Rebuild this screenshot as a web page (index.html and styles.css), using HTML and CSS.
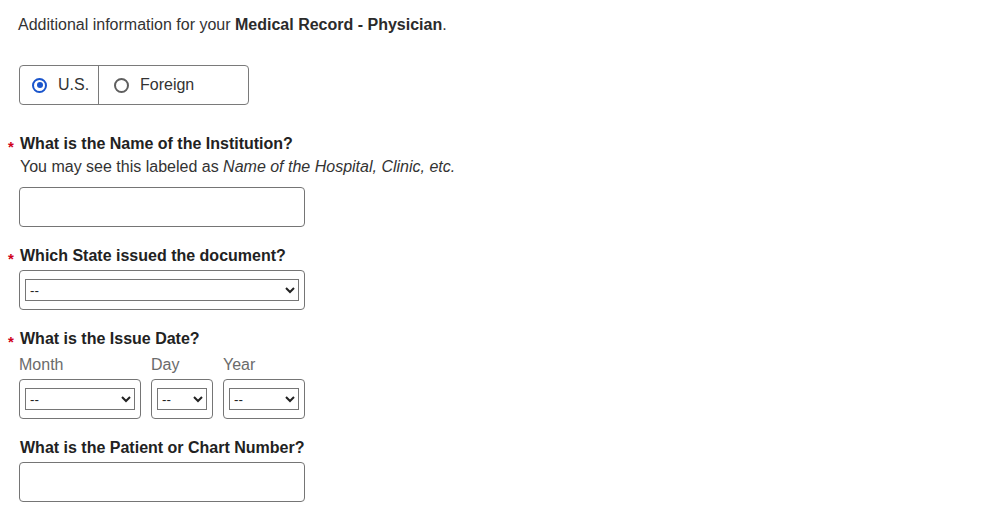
FILE: index.html
```html
<!DOCTYPE html>
<html lang="en">
<head>
<meta charset="utf-8">
<title>Medical Record - Physician</title>
<link rel="stylesheet" href="styles.css">
</head>
<body>
<div class="page">
  <p class="intro">Additional information for your <strong>Medical Record - Physician</strong>.</p>

  <div class="toggle">
    <label class="toggle-opt toggle-us"><span class="radio radio-on"></span><span>U.S.</span></label>
    <label class="toggle-opt toggle-foreign"><span class="radio"></span><span>Foreign</span></label>
  </div>

  <div class="field field-first">
    <div class="label req">What is the Name of the Institution?</div>
    <div class="help">You may see this labeled as <em>Name of the Hospital, Clinic, etc.</em></div>
    <input class="textbox textbox-help" type="text">
  </div>

  <div class="field">
    <div class="label req">Which State issued the document?</div>
    <div class="selwrap sel-full"><select class="sel"><option>--</option></select></div>
  </div>

  <div class="field">
    <div class="label req">What is the Issue Date?</div>
    <div class="date-row">
      <div class="date-col col-month">
        <div class="sublabel">Month</div>
        <div class="selwrap"><select class="sel"><option>--</option></select></div>
      </div>
      <div class="date-col col-day">
        <div class="sublabel">Day</div>
        <div class="selwrap"><select class="sel"><option>--</option></select></div>
      </div>
      <div class="date-col col-year">
        <div class="sublabel">Year</div>
        <div class="selwrap"><select class="sel"><option>--</option></select></div>
      </div>
    </div>
  </div>

  <div class="field">
    <div class="label">What is the Patient or Chart Number?</div>
    <input class="textbox" type="text">
  </div>
</div>
</body>
</html>
```

FILE: styles.css
```css
html, body {
  margin: 0;
  padding: 0;
  background: #ffffff;
}

body {
  font-family: "Liberation Sans", Arial, sans-serif;
  font-size: 16px;
  line-height: 22px;
  color: #333333;
}

.page {
  padding: 14px 0 0 19px;
  width: 600px;
}

.intro {
  margin: 0 0 29px -1px;
}

.intro strong {
  font-weight: bold;
  color: #2b2b2b;
}

.toggle {
  display: flex;
  width: 228px;
  height: 38px;
  border: 1px solid #7a7a7a;
  border-radius: 4px;
}

.toggle-opt {
  display: flex;
  align-items: center;
  gap: 11px;
  color: #333;
}

.toggle-us {
  width: 79px;
  padding-left: 12px;
  box-sizing: border-box;
  border-right: 1px solid #7a7a7a;
}

.toggle-foreign {
  padding-left: 15px;
}

.radio {
  width: 15px;
  height: 15px;
  box-sizing: border-box;
  border: 2px solid #5f5f5f;
  border-radius: 50%;
  display: flex;
  align-items: center;
  justify-content: center;
  flex: none;
}

.radio-on {
  border-color: #1a55cc;
}

.radio-on::after {
  content: "";
  width: 6px;
  height: 6px;
  border-radius: 50%;
  background: #1a55cc;
}

.field {
  margin-top: 18px;
}

.field-first {
  margin-top: 28px;
}

.label {
  position: relative;
  font-weight: bold;
  color: #222222;
  margin-bottom: 3px;
  padding-left: 1px;
}

.field-first .label {
  margin-bottom: 1px;
}

.req::before {
  content: "*";
  position: absolute;
  left: -11px;
  top: 3px;
  color: #d0021b;
  font-size: 15px;
  font-weight: bold;
}

.help {
  color: #333;
  margin-bottom: 9px;
  padding-left: 1px;
}

.help em {
  font-style: italic;
}

.textbox {
  display: block;
  width: 286px;
  height: 40px;
  box-sizing: border-box;
  border: 1px solid #757575;
  border-radius: 4px;
  margin: 0;
  padding: 0 8px;
  font-family: inherit;
  font-size: 16px;
  background: #fff;
}

.selwrap {
  box-sizing: border-box;
  height: 40px;
  border: 1px solid #757575;
  border-radius: 4px;
  padding: 8px 5px 0 5px;
}

.sel-full {
  width: 286px;
}

.sel {
  display: block;
  width: 100%;
  height: 22px;
  margin: 0;
  font-family: "Liberation Sans", Arial, sans-serif;
  font-size: 13.33px;
  color: #222;
  border: 1px solid #767676;
  border-radius: 0;
  background: #fff;
}

.date-row {
  display: flex;
  gap: 10px;
}

.sublabel {
  color: #6b6b6b;
  padding-top: 1px;
  margin-bottom: 3px;
}

.col-month {
  width: 122px;
}

.col-day {
  width: 62px;
}

.col-year {
  width: 82px;
}
```
